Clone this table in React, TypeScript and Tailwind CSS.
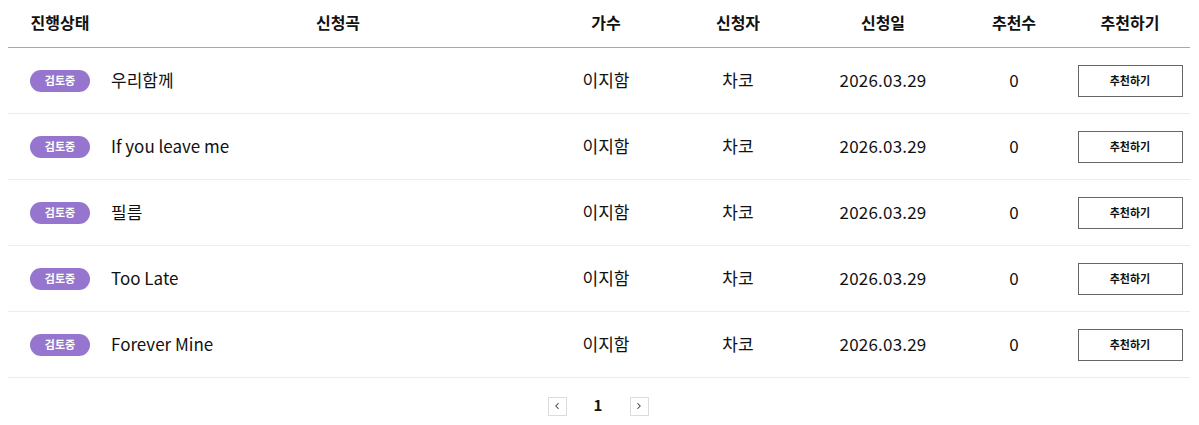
import { ChevronLeft, ChevronRight } from "lucide-react";

const rows = [
  { title: "우리함께" },
  { title: "If you leave me" },
  { title: "필름" },
  { title: "Too Late" },
  { title: "Forever Mine" },
];

const grid = "grid grid-cols-[104px_432px_124px_140px_150px_112px_120px]";

export default function App() {
  return (
    <div
      className="w-[1199px] h-[425px] bg-white px-2 text-[#111]"
      style={{ fontFamily: '"Noto Sans CJK KR", "Noto Sans", sans-serif' }}
    >
      <div className="w-[1182px]">
        {/* header */}
        <div className={`${grid} h-[48px] items-center border-b border-[#a8a8a8] text-[16px] font-bold pb-[3px]`}>
          <div className="text-center">진행상태</div>
          <div className="text-center pl-5">신청곡</div>
          <div className="text-center">가수</div>
          <div className="text-center">신청자</div>
          <div className="text-center">신청일</div>
          <div className="text-center">추천수</div>
          <div className="text-center">추천하기</div>
        </div>

        {rows.map((r) => (
          <div key={r.title} className={`${grid} h-[66px] items-center border-b border-[#ececec] text-[17px]`}>
            <div className="flex justify-center">
              <span className="h-[22px] w-[60px] rounded-full bg-[#9575cd] text-white text-[11px] font-bold flex items-center justify-center">
                검토중
              </span>
            </div>
            <div className="-ml-px -mt-[2px]">{r.title}</div>
            <div className="text-center -mt-[2px]">이지함</div>
            <div className="text-center -mt-[2px]">차코</div>
            <div className="text-center tracking-[0.2px] -mt-[2px]">2026.03.29</div>
            <div className="text-center -mt-[2px]">0</div>
            <div className="flex justify-center">
              <button className="w-[105px] h-[32px] border border-[#666] bg-white text-[11px] font-semibold">
                추천하기
              </button>
            </div>
          </div>
        ))}

        {/* pagination */}
        <div className="flex items-center justify-center pt-[18px] pr-[2px]">
          <button className="w-[19px] h-[19px] border border-[#dcdcdc] flex items-center justify-center text-[#333]">
            <ChevronLeft size={10} strokeWidth={2.5} />
          </button>
          <span className="w-[63px] text-center text-[15px] font-bold -mt-[2px]">1</span>
          <button className="w-[19px] h-[19px] border border-[#dcdcdc] flex items-center justify-center text-[#333]">
            <ChevronRight size={10} strokeWidth={2.5} />
          </button>
        </div>
      </div>
    </div>
  );
}
